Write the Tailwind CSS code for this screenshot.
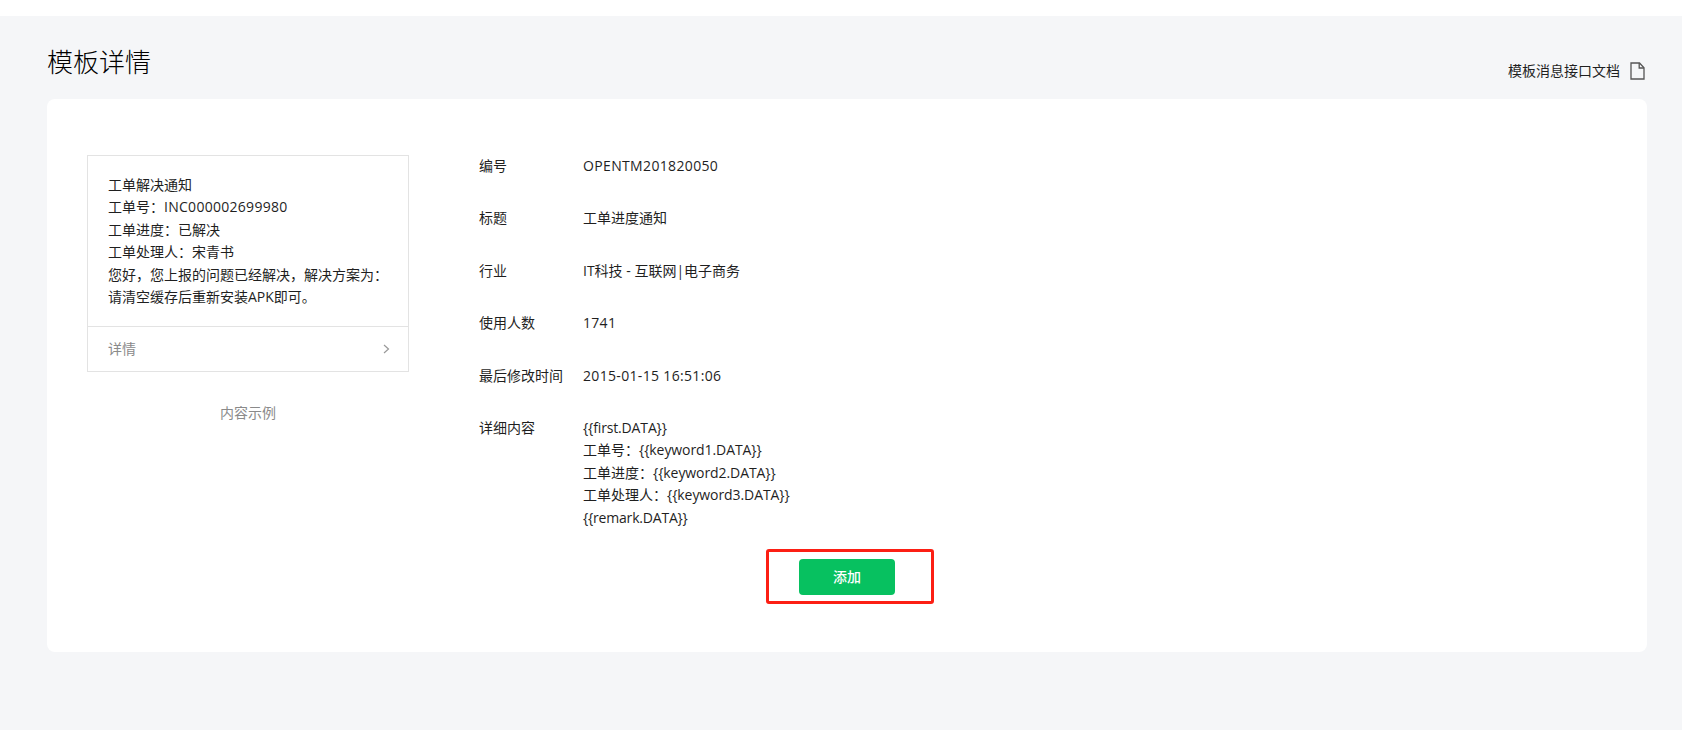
<!DOCTYPE html>
<html lang="zh-CN">
<head>
<meta charset="utf-8">
<script src="https://cdn.jsdelivr.net/npm/@tailwindcss/browser@4"></script>
<title>模板详情</title>
</head>
<body class="m-0 h-[730px] overflow-hidden bg-[#f5f6f8] font-['Open_Sans','Noto_Sans_CJK_SC',sans-serif] text-[14px] leading-[22.4px] text-[#1f1f1f]">
  <div class="h-4 bg-white"></div>
  <main class="pl-[47px] pr-[35px]">
    <header class="flex h-[83px] items-start justify-between">
      <h1 class="mt-[25px] text-[26px] leading-[42px] font-light text-black">模板详情</h1>
      <a class="mt-[44px] mr-[2px] flex items-center gap-[10px]">
        <span>模板消息接口文档</span>
        <svg class="h-[18px] w-[15px]" viewBox="0 0 15 18" fill="none" stroke="#555" stroke-width="1.3">
          <path d="M1 1h8.5L14 5.8V17H1z"/>
          <path d="M9.2 1v5H14"/>
        </svg>
      </a>
    </header>
    <section class="relative flex h-[553px] rounded-lg bg-white pt-[56px] pl-[40px]">
      <aside class="w-[322px] shrink-0">
        <div class="border border-[#e3e3e3]">
          <div class="px-5 pt-[18px] pb-[18px]">
            <p>工单解决通知</p>
            <p>工单号：<span class="tracking-[0.28px]">INC000002699980</span></p>
            <p>工单进度：已解决</p>
            <p>工单处理人：宋青书</p>
            <p>您好，您上报的问题已经解决，解决方案为：</p>
            <p>请清空缓存后重新安装APK即可。</p>
          </div>
          <div class="flex h-[45px] items-center justify-between border-t border-[#e3e3e3] pr-[18px] pl-5 text-[#8a8a8a]">
            <span>详情</span>
            <svg class="h-[10px] w-[7px]" viewBox="0 0 7 10" fill="none" stroke="#999" stroke-width="1.2"><path d="M1 1l4.5 4L1 9"/></svg>
          </div>
        </div>
        <p class="mt-[30px] text-center text-[#8a8a8a]">内容示例</p>
      </aside>
      <div class="ml-[70px] flex-1">
        <dl class="flex flex-col gap-[30px]">
          <div class="flex"><dt class="w-[104px]">编号</dt><dd class="tracking-[0.35px]">OPENTM201820050</dd></div>
          <div class="flex"><dt class="w-[104px]">标题</dt><dd>工单进度通知</dd></div>
          <div class="flex"><dt class="w-[104px]">行业</dt><dd>IT科技 - 互联网|电子商务</dd></div>
          <div class="flex"><dt class="w-[104px]">使用人数</dt><dd class="tracking-[0.3px]">1741</dd></div>
          <div class="flex"><dt class="w-[104px]">最后修改时间</dt><dd class="tracking-[0.33px]">2015-01-15 16:51:06</dd></div>
          <div class="flex"><dt class="w-[104px]">详细内容</dt><dd><span class="tracking-[-0.15px]">{{first.DATA}}</span><br>工单号：<span class="tracking-[-0.08px]">{{keyword1.DATA}}</span><br>工单进度：<span class="tracking-[-0.08px]">{{keyword2.DATA}}</span><br>工单处理人：<span class="tracking-[-0.08px]">{{keyword3.DATA}}</span><br><span class="tracking-[-0.2px]">{{remark.DATA}}</span></dd></div>
        </dl>
      </div>
      <div class="absolute top-[450px] left-[719px] flex h-[55px] w-[168px] items-start rounded-[3px] border-[3px] border-[#fc1f14] pt-[7px] pl-[30px]">
        <button class="h-9 w-24 rounded-[4px] bg-[#07c160] text-[14px] font-medium text-white">添加</button>
      </div>
    </section>
  </main>
</body>
</html>
